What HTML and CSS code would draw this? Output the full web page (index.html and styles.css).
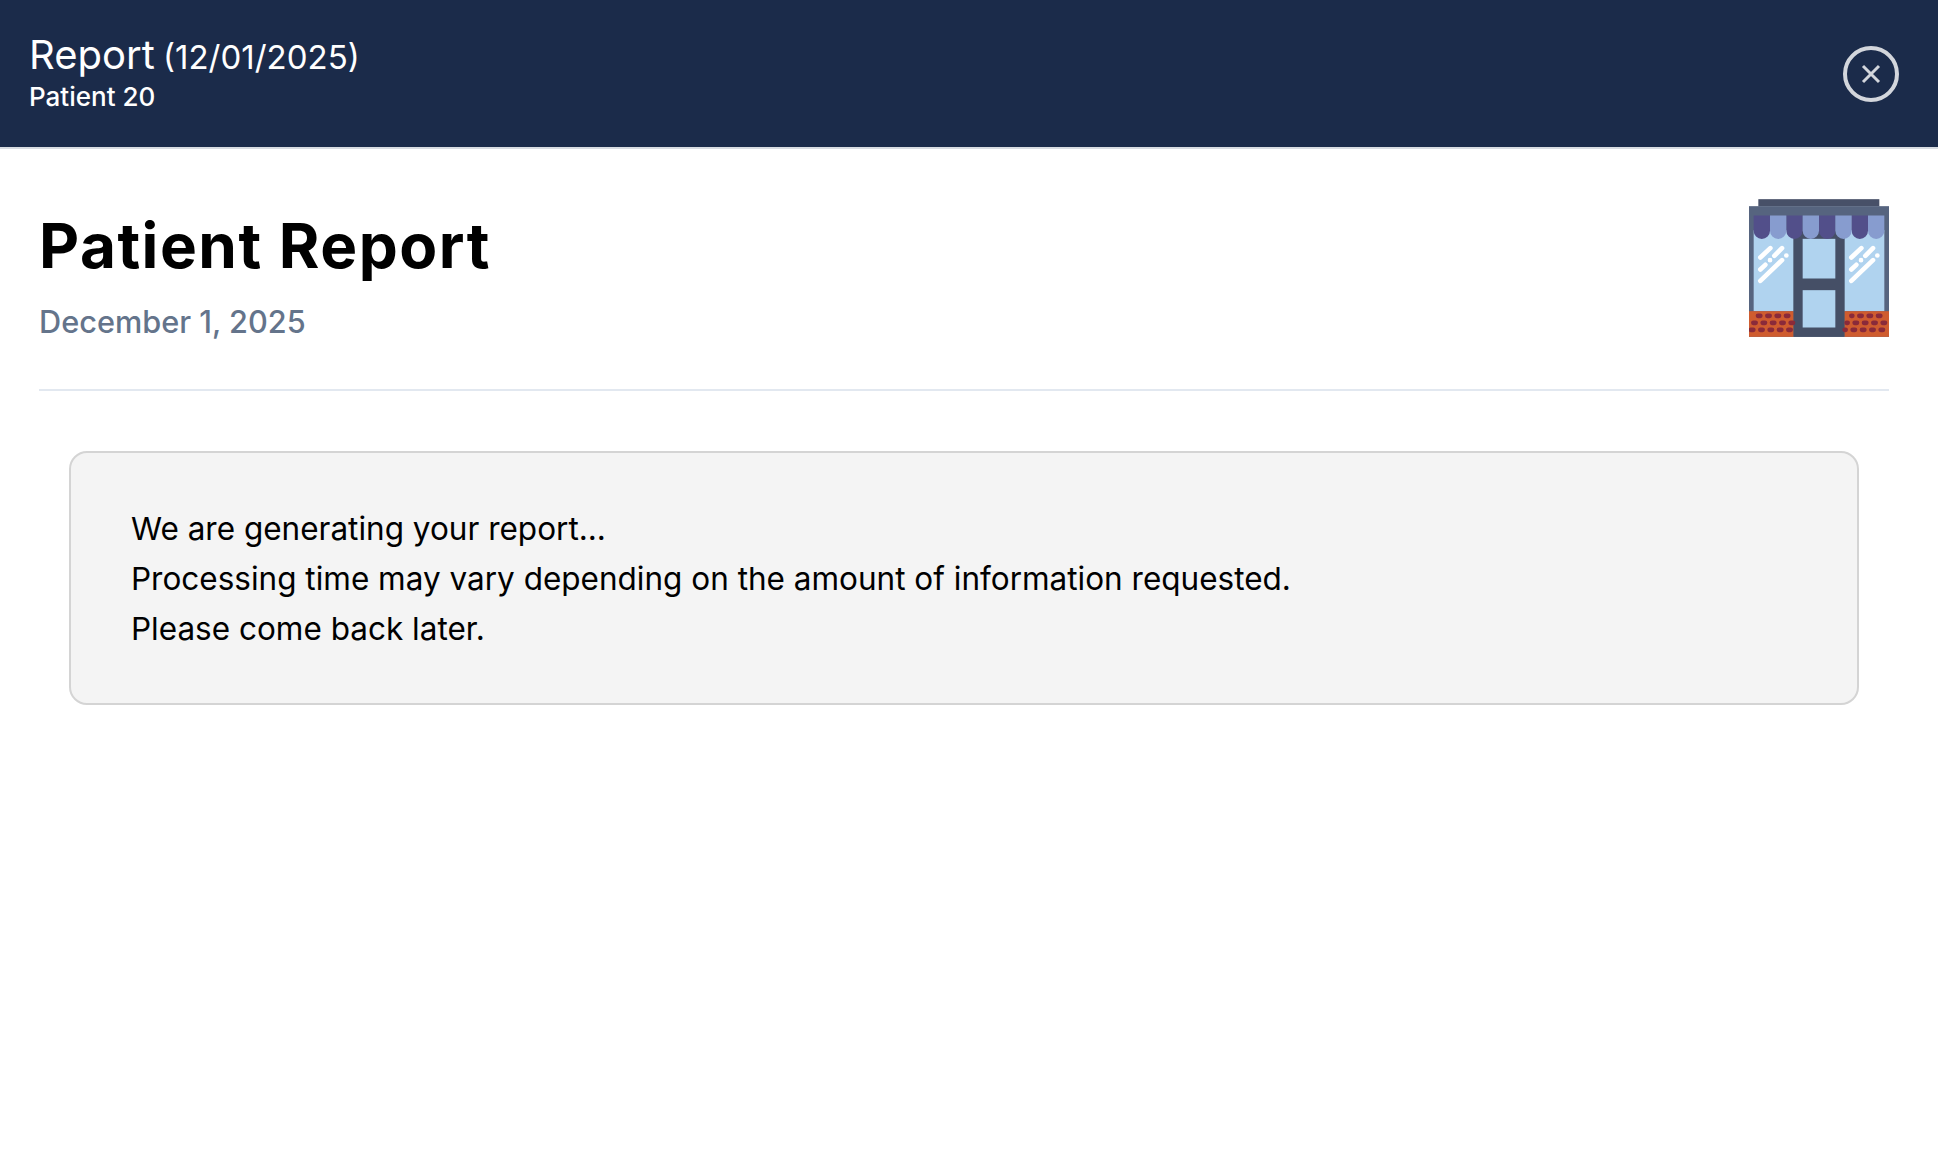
FILE: index.html
```html
<!DOCTYPE html>
<html lang="en">
<head>
    <meta charset="UTF-8">
    <meta name="viewport" content="width=device-width, initial-scale=1.0">
    <title>Report</title>
    <link rel="stylesheet" href="styles.css">
</head>
<body>
    <header class="topbar">
        <div class="topbar-titles">
            <div class="topbar-title">Report <span class="topbar-date">(12/01/2025)</span></div>
            <div class="topbar-patient">Patient 20</div>
        </div>
        <button class="close-btn" type="button" aria-label="Close">
            <svg width="20" height="20" viewBox="0 0 20 20" fill="none" stroke="#d3d6dc" stroke-width="3">
                <path d="M2 2L18 18M18 2L2 18"/>
            </svg>
        </button>
    </header>

    <main class="report">
        <div class="report-head">
            <div>
                <h1>Patient Report</h1>
                <div class="report-date">December 1, 2025</div>
            </div>
            <!-- store front, drawn in 3x units -->
            <svg class="shop-icon" width="140" height="138" viewBox="87 57 420 413">
                <rect x="115" y="57" width="363" height="22" fill="#475068"/>
                <rect x="87" y="78" width="420" height="392" fill="#56647f"/>
                <rect x="101" y="150" width="392" height="243" fill="#b0d3ef"/>
                <rect x="220" y="150" width="154" height="320" fill="#454f66"/>
                <rect x="248" y="176" width="98" height="119" fill="#b0d3ef"/>
                <rect x="248" y="330" width="98" height="112" fill="#b0d3ef"/>

                <path fill="#524f8a" d="M101 106h49v46a24.500 24.500 0 0 1-49 0zM199 106h49v46a24.500 24.500 0 0 1-49 0zM297 106h49v46a24.500 24.500 0 0 1-49 0zM395 106h49v46a24.500 24.500 0 0 1-49 0z"/>
                <path fill="#879ccf" d="M150 106h49v46a24.500 24.500 0 0 1-49 0zM248 106h49v46a24.500 24.500 0 0 1-49 0zM346 106h49v46a24.500 24.500 0 0 1-49 0zM444 106h49v46a24.500 24.500 0 0 1-49 0z"/>

                <g stroke="#fff" stroke-width="14" stroke-linecap="round" fill="none">
                    <path d="M121 232L151 204M163 227L186 204M121 268L136 254M121 302L186 240"/>
                    <path d="M394 232L424 204M436 227L459 204M394 268L409 254M394 302L459 240"/>
                    <path d="M150 240h.1M199 226h.1M423 240h.1M472 226h.1"/>
                </g>

                <rect x="87" y="393" width="133" height="77" fill="#cf5c2f"/>
                <rect x="374" y="393" width="133" height="77" fill="#cf5c2f"/>
                <g stroke="#8a2a3a" stroke-width="14" stroke-linecap="round" stroke-dasharray="7 21" fill="none">
                    <path d="M114 407H212M100 428H220M93 449H220"/>
                    <path d="M394 407H492M380 428H507M374 449H507" stroke-dashoffset="4"/>
                </g>
            </svg>
        </div>

        <div class="status-box">
            <p>We are generating your report...</p>
            <p>Processing time may vary depending on the amount of information requested.</p>
            <p>Please come back later.</p>
        </div>
    </main>
</body>
</html>
```

FILE: styles.css
```css
* {
    box-sizing: border-box;
}

body {
    margin: 0;
    font-family: Inter, "Noto Sans", sans-serif;
    background-color: #fff;
    color: #000;
}

.topbar {
    height: 149px;
    padding: 0 39px 0 29px;
    display: flex;
    align-items: center;
    justify-content: space-between;
    background-color: #1b2b4a;
    border-bottom: 2px solid #d8dce2;
    color: #fff;
}

.topbar-titles {
    padding-bottom: 2px;
}

.topbar-title {
    font-size: 40px;
    line-height: 44px;
    word-spacing: -3px;
}

.topbar-date {
    font-size: 33px;
}

.topbar-patient {
    margin-top: 2px;
    font-size: 26px;
    line-height: 32px;
    font-weight: 500;
}

.close-btn {
    width: 56px;
    height: 56px;
    padding: 0;
    display: flex;
    align-items: center;
    justify-content: center;
    background: none;
    border: 4px solid #d3d6dc;
    border-radius: 50%;
    cursor: pointer;
}

.report {
    padding: 50px 49px 50px 39px;
}

.report-head {
    display: flex;
    justify-content: space-between;
    align-items: flex-start;
    height: 192px;
    border-bottom: 2px solid #e2e8f0;
}

h1 {
    margin: 11px 0 0;
    font-size: 62px;
    line-height: 72px;
    font-weight: 700;
    letter-spacing: 1.5px;
}

.report-date {
    margin-top: 20px;
    font-size: 30.700px;
    line-height: 40px;
    font-weight: 500;
    color: #64748b;
}

.status-box {
    margin: 60px 30px 0;
    height: 254px;
    padding: 51px 60px;
    background-color: #f4f4f4;
    border: 2px solid #d4d4d4;
    border-radius: 18px;
}

.status-box p {
    margin: 0;
    font-size: 31.500px;
    line-height: 50px;
}
```
